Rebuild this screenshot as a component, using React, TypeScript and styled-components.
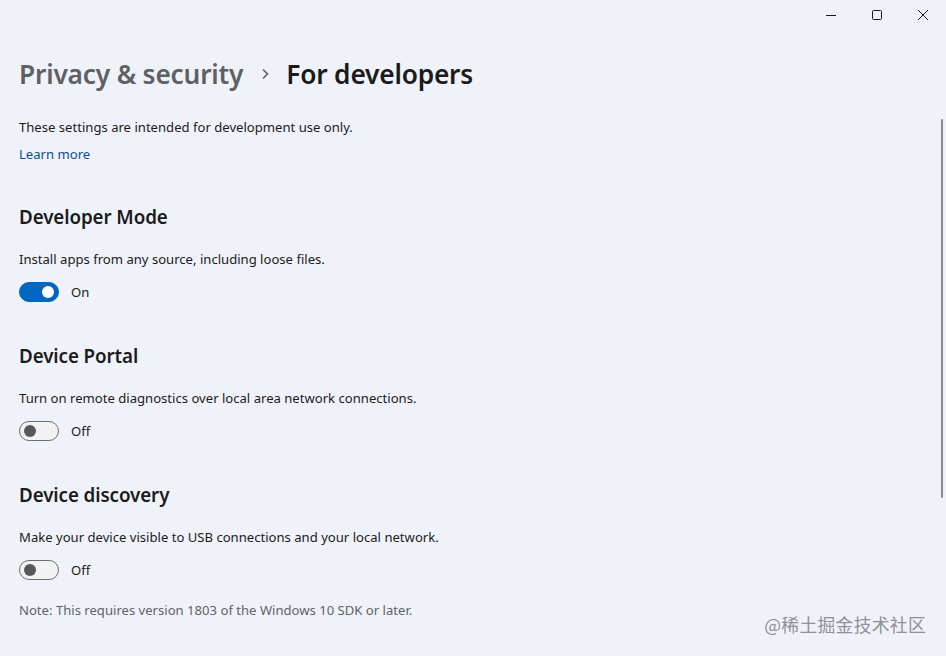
import styled, { createGlobalStyle } from 'styled-components';

const GlobalStyle = createGlobalStyle`
	html, body {
		margin: 0;
		padding: 0;
		background: #eff3f9;
	}
	body {
		font-family: 'Noto Sans', 'Open Sans', sans-serif;
		color: #1b1b1b;
	}
`;

const Window = styled.div`
	position: relative;
	width: 946px;
	height: 656px;
	overflow: hidden;
	background: #eff3f9;
`;

const TitleBar = styled.div`
	display: flex;
	justify-content: flex-end;
	height: 30px;
`;

const CaptionButton = styled.div`
	width: 46px;
	height: 30px;
	display: flex;
	align-items: center;
	justify-content: center;
	color: #1b1b1b;
`;

const Content = styled.main`
	padding: 24px 19px 0;
`;

const Breadcrumb = styled.h1`
	display: flex;
	align-items: center;
	margin: 0;
	font-size: 26.3px;
	font-weight: 600;
	line-height: 40px;
	letter-spacing: -0.2px;
`;

const Crumb = styled.span<{ $current?: boolean }>`
	color: ${(p) => (p.$current ? '#1b1b1b' : '#5d6065')};
`;

const Chevron = styled.span`
	display: flex;
	margin: 0 17px 0 18px;
	color: #5d6065;
`;

const Text = styled.p<{ $muted?: boolean }>`
	margin: 0;
	font-size: 13.1px;
	line-height: 20px;
	color: ${(p) => (p.$muted ? '#606368' : '#1b1b1b')};
`;

const Intro = styled.div`
	margin-top: 23px;
	display: flex;
	flex-direction: column;
	gap: 7px;
`;

const Link = styled.a`
	font-size: 13.1px;
	line-height: 20px;
	color: #0f4c92;
	text-decoration: none;
`;

const Section = styled.section`
	margin-top: 40px;
	& + & {
		margin-top: 41px;
	}
`;

const SectionTitle = styled.h2`
	margin: 0 0 19px;
	font-size: 18.8px;
	font-weight: 600;
	line-height: 26px;
	letter-spacing: -0.1px;
`;

const ToggleRow = styled.div`
	display: flex;
	align-items: center;
	gap: 12px;
	margin-top: 13px;
`;

const Track = styled.div<{ $on: boolean }>`
	box-sizing: border-box;
	width: 40px;
	height: 20px;
	border-radius: 10px;
	display: flex;
	align-items: center;
	padding: 0 4px;
	justify-content: ${(p) => (p.$on ? 'flex-end' : 'flex-start')};
	background: ${(p) => (p.$on ? '#0067c0' : '#f2f2f4')};
	border: 1px solid ${(p) => (p.$on ? '#0067c0' : '#6a6d72')};
`;

const Knob = styled.div<{ $on: boolean }>`
	width: 12px;
	height: 12px;
	border-radius: 50%;
	background: ${(p) => (p.$on ? '#ffffff' : '#55585d')};
`;

const ToggleLabel = styled.span`
	font-size: 13.1px;
	line-height: 20px;
`;

const Note = styled(Text)`
	margin-top: 20px;
`;

const Scrollbar = styled.div`
	position: absolute;
	right: 3px;
	top: 119px;
	width: 2px;
	height: 379px;
	border-radius: 1px;
	background: #868b92;
`;

const Watermark = styled.div`
	position: absolute;
	right: 20px;
	bottom: 19px;
	font-family: 'Noto Sans CJK SC', sans-serif;
	font-size: 17.8px;
	color: #8e9196;
	letter-spacing: 0.3px;
`;

type ToggleProps = { on: boolean };

const Toggle = ({ on }: ToggleProps) => (
	<ToggleRow>
		<Track $on={on}>
			<Knob $on={on} />
		</Track>
		<ToggleLabel>{on ? 'On' : 'Off'}</ToggleLabel>
	</ToggleRow>
);

const settings = [
	{
		title: 'Developer Mode',
		description: 'Install apps from any source, including loose files.',
		on: true
	},
	{
		title: 'Device Portal',
		description: 'Turn on remote diagnostics over local area network connections.',
		on: false
	},
	{
		title: 'Device discovery',
		description: 'Make your device visible to USB connections and your local network.',
		on: false
	}
];

const App = () => (
	<Window>
		<GlobalStyle />
		<TitleBar>
			<CaptionButton>
				<svg width="10" height="10" viewBox="0 0 10 10">
					<path d="M0 5.5h10" stroke="currentColor" strokeWidth="1" />
				</svg>
			</CaptionButton>
			<CaptionButton>
				<svg width="10" height="10" viewBox="0 0 10 10">
					<rect x="0.5" y="0.5" width="9" height="9" rx="1" fill="none" stroke="currentColor" strokeWidth="1" />
				</svg>
			</CaptionButton>
			<CaptionButton>
				<svg width="10" height="10" viewBox="0 0 10 10">
					<path d="M0 0l10 10M10 0L0 10" stroke="currentColor" strokeWidth="1" />
				</svg>
			</CaptionButton>
		</TitleBar>
		<Content>
			<Breadcrumb>
				<Crumb>Privacy &amp; security</Crumb>
				<Chevron>
					<svg width="8" height="12" viewBox="0 0 8 12">
						<path d="M2 1.5l4.5 4.5L2 10.5" fill="none" stroke="currentColor" strokeWidth="1.6" />
					</svg>
				</Chevron>
				<Crumb $current>For developers</Crumb>
			</Breadcrumb>
			<Intro>
				<Text>These settings are intended for development use only.</Text>
				<Link href="#">Learn more</Link>
			</Intro>
			{settings.map((s) => (
				<Section key={s.title}>
					<SectionTitle>{s.title}</SectionTitle>
					<Text>{s.description}</Text>
					<Toggle on={s.on} />
				</Section>
			))}
			<Note $muted>Note: This requires version 1803 of the Windows 10 SDK or later.</Note>
		</Content>
		<Scrollbar />
		<Watermark>@稀土掘金技术社区</Watermark>
	</Window>
);

export default App;
